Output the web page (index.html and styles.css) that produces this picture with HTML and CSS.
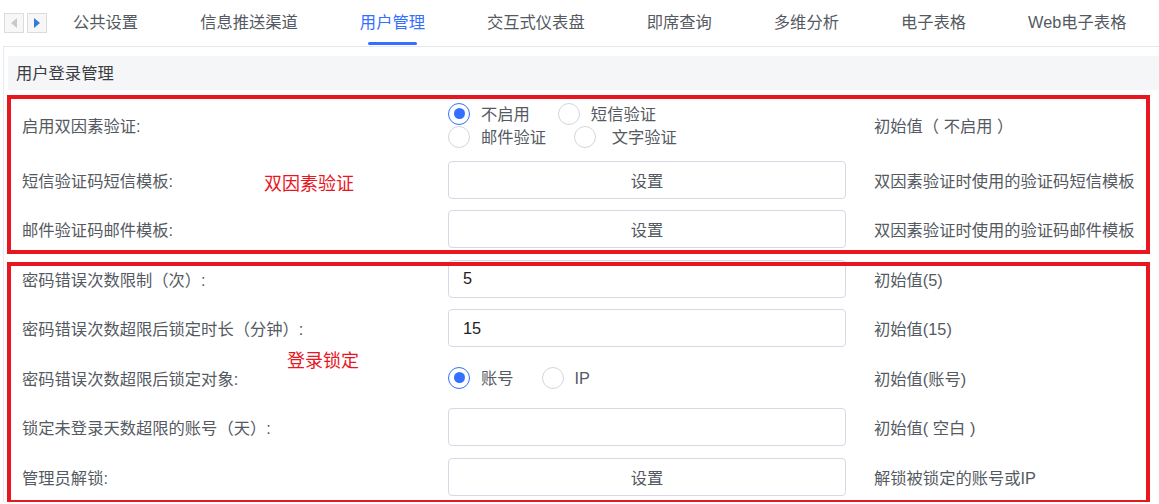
FILE: index.html
```html
<!DOCTYPE html>
<html lang="zh-CN">
<head>
    <meta charset="UTF-8">
    <meta name="viewport" content="width=device-width, initial-scale=1.0">
    <title>用户管理 - 用户登录管理</title>
    <link rel="stylesheet" href="styles.css">
</head>
<body>
    <div class="tabbar">
        <div class="tab-arrows">
            <span class="arrow arrow-left"></span>
            <span class="arrow arrow-right"></span>
        </div>
        <div class="tabs">
            <div class="tab">公共设置</div>
            <div class="tab">信息推送渠道</div>
            <div class="tab active">用户管理</div>
            <div class="tab">交互式仪表盘</div>
            <div class="tab">即席查询</div>
            <div class="tab">多维分析</div>
            <div class="tab">电子表格</div>
            <div class="tab">Web电子表格</div>
        </div>
    </div>

    <div class="panel">
        <div class="panel-title">用户登录管理</div>

        <div class="group group-2fa">
            <span class="note">双因素验证</span>
            <div class="row row-tall">
                <div class="label">启用双因素验证:</div>
                <div class="control">
                    <div class="radios radios-wrap">
                        <label class="radio checked"><span class="dot"></span>不启用</label>
                        <label class="radio"><span class="dot"></span>短信验证</label>
                        <label class="radio"><span class="dot"></span>邮件验证</label>
                        <label class="radio"><span class="dot"></span>&nbsp;文字验证</label>
                    </div>
                </div>
                <div class="desc">初始值（ 不启用 ）</div>
            </div>
            <div class="row">
                <div class="label">短信验证码短信模板:</div>
                <div class="control"><button class="btn">设置</button></div>
                <div class="desc">双因素验证时使用的验证码短信模板</div>
            </div>
            <div class="row">
                <div class="label">邮件验证码邮件模板:</div>
                <div class="control"><button class="btn">设置</button></div>
                <div class="desc">双因素验证时使用的验证码邮件模板</div>
            </div>
        </div>

        <div class="group group-lock">
            <span class="note">登录锁定</span>
            <div class="row">
                <div class="label">密码错误次数限制（次）:</div>
                <div class="control"><input class="input" type="text" value="5"></div>
                <div class="desc">初始值(5)</div>
            </div>
            <div class="row">
                <div class="label">密码错误次数超限后锁定时长（分钟）:</div>
                <div class="control"><input class="input" type="text" value="15"></div>
                <div class="desc">初始值(15)</div>
            </div>
            <div class="row">
                <div class="label">密码错误次数超限后锁定对象:</div>
                <div class="control">
                    <div class="radios">
                        <label class="radio checked"><span class="dot"></span>账号</label>
                        <label class="radio"><span class="dot"></span>IP</label>
                    </div>
                </div>
                <div class="desc">初始值(账号)</div>
            </div>
            <div class="row">
                <div class="label">锁定未登录天数超限的账号（天）:</div>
                <div class="control"><input class="input" type="text" value=""></div>
                <div class="desc">初始值( 空白 )</div>
            </div>
            <div class="row">
                <div class="label">管理员解锁:</div>
                <div class="control"><button class="btn">设置</button></div>
                <div class="desc">解锁被锁定的账号或IP</div>
            </div>
        </div>
    </div>
</body>
</html>
```

FILE: styles.css
```css
body {
    margin: 0;
    background: #ffffff;
    font-family: "Liberation Sans", "Noto Sans CJK SC", sans-serif;
    font-size: 16.3px;
    color: #555a62;
    overflow: hidden;
}
.tabbar {
    display: flex;
    margin-left: 3px;
    height: 46px;
    border-bottom: 1px solid #e4e7ed;
}
.tab-arrows {
    display: flex;
    gap: 3px;
    padding: 13px 0 0 1px;
}
.arrow {
    width: 18px;
    height: 18px;
    border: 1px solid #dcdcdc;
    background: #f7f7f7;
    display: flex;
    align-items: center;
    justify-content: center;
}
.arrow::before {
    content: "";
    width: 0;
    height: 0;
    border-top: 5px solid transparent;
    border-bottom: 5px solid transparent;
}
.arrow-left::before {
    border-right: 6px solid #c9c9c9;
}
.arrow-right::before {
    border-left: 6px solid #2f7be0;
}
.tabs {
    display: flex;
    gap: 62px;
    padding-left: 26px;
}
.tab {
    display: flex;
    flex-direction: column;
    align-items: center;
    padding-top: 12px;
    line-height: 20px;
    white-space: nowrap;
    color: #555a62;
}
.tab::after {
    content: "";
    width: 49px;
    height: 3px;
    margin-top: 10px;
    border-radius: 2px;
    background: transparent;
}
.tab.active {
    color: #3370ff;
}
.tab.active::after {
    background: #3370ff;
}
.panel {
    margin-left: 3px;
    border-left: 1px solid #e8eaef;
    padding: 9px 0 0 4px;
}
.panel-title {
    height: 34px;
    line-height: 34px;
    padding-left: 8px;
    background: #f5f6f7;
    color: #3a3d42;
}
.group-2fa {
    margin-top: 5px;
}
.group {
    position: relative;
    margin-left: -1px;
    width: 1143px;
}
.group::after {
    content: "";
    position: absolute;
    left: 0;
    right: 0;
    top: 0;
    bottom: 0;
    border: 4px solid #e8161f;
    pointer-events: none;
}
.group-lock::after {
    top: 8px;
    bottom: -2px;
}
.note {
    position: absolute;
    color: #e8161f;
    font-size: 18px;
    line-height: 22px;
    z-index: 1;
}
.group-2fa .note {
    left: 257px;
    top: 78px;
}
.group-lock .note {
    left: 280px;
    top: 96px;
}
.row {
    display: flex;
    align-items: center;
    height: 49.5px;
    padding-left: 15px;
}
.row-tall {
    height: 60px;
}
.label {
    width: 426px;
    flex-shrink: 0;
}
.control {
    width: 398px;
    flex-shrink: 0;
}
.desc {
    margin-left: 28px;
    white-space: nowrap;
}
.btn, .input {
    display: block;
    box-sizing: border-box;
    width: 100%;
    height: 38px;
    border: 1px solid #d6d9e4;
    border-radius: 4px;
    background: #ffffff;
    font: inherit;
}
.btn {
    color: #555a62;
    text-align: center;
}
.input {
    padding-left: 14px;
    color: #222222;
    outline: none;
}
.radios {
    display: flex;
    flex-wrap: wrap;
    align-items: center;
    row-gap: 1px;
    line-height: 22px;
}
.radios-wrap {
    width: 260px;
}
.radio {
    display: flex;
    align-items: center;
    gap: 11px;
    margin-right: 28px;
    white-space: nowrap;
}
.dot {
    box-sizing: border-box;
    width: 22px;
    height: 22px;
    border: 1px solid #d3d6df;
    border-radius: 50%;
    display: flex;
    align-items: center;
    justify-content: center;
}
.radio.checked .dot {
    border: 1.5px solid #3370ff;
}
.radio.checked .dot::before {
    content: "";
    width: 11px;
    height: 11px;
    border-radius: 50%;
    background: #3370ff;
}
```
